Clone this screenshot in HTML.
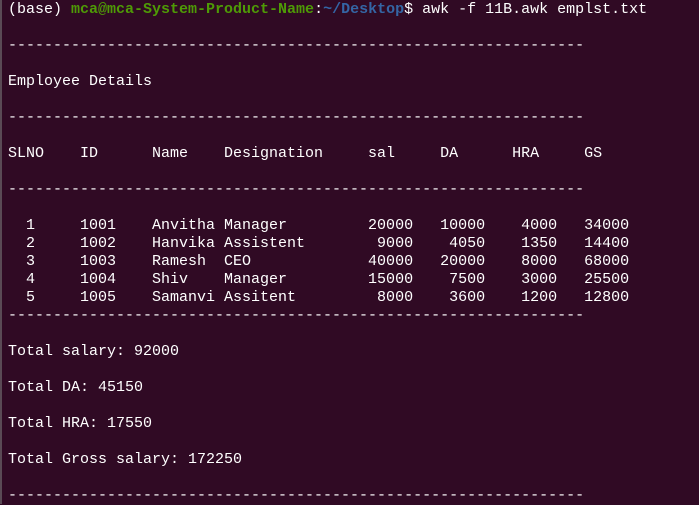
<!DOCTYPE html>
<html><head><meta charset="utf-8"><style>
html,body{margin:0;padding:0;}
body{width:699px;height:504px;background:#300a24;overflow:hidden;position:relative;}
.edge{position:absolute;left:0;top:0;width:2px;height:504px;background:#5a4a55;}
pre{margin:0;position:absolute;left:8px;top:1px;font-family:"Liberation Mono",monospace;font-size:15px;line-height:18px;color:#ffffff;}
.g{color:#4e9a06;font-weight:bold}
.b{color:#3465a4;font-weight:bold}
</style></head><body><div class="edge"></div><pre>(base) <span class="g">mca@mca-System-Product-Name</span>:<span class="b">~/Desktop</span>$ awk -f 11B.awk emplst.txt

----------------------------------------------------------------

Employee Details

----------------------------------------------------------------

SLNO    ID      Name    Designation     sal     DA      HRA     GS

----------------------------------------------------------------

  1     1001    Anvitha Manager         20000   10000    4000   34000
  2     1002    Hanvika Assistent        9000    4050    1350   14400
  3     1003    Ramesh  CEO             40000   20000    8000   68000
  4     1004    Shiv    Manager         15000    7500    3000   25500
  5     1005    Samanvi Assitent         8000    3600    1200   12800
----------------------------------------------------------------

Total salary: 92000

Total DA: 45150

Total HRA: 17550

Total Gross salary: 172250

----------------------------------------------------------------
</pre></body></html>
